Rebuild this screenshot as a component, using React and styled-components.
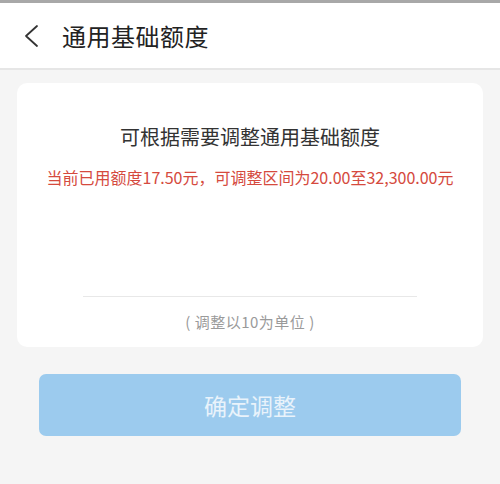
import React from 'react';
import styled, { createGlobalStyle } from 'styled-components';

const Global = createGlobalStyle`
  html, body { margin: 0; padding: 0; background: #f5f5f5; }
  body { font-family: "Noto Sans CJK SC", "Noto Sans", sans-serif; }
`;

const Page = styled.div`
  width: 500px;
  height: 484px;
  background: #f5f5f5;
  border-top: 3px solid #a8a8a8;
  box-sizing: border-box;
  overflow: hidden;
`;

const Header = styled.div`
  height: 65px;
  background: #fff;
  border-bottom: 2px solid #e6e6e6;
  display: flex;
  align-items: center;
  padding-left: 20px;
  gap: 20px;
`;

const BackBtn = styled.div`
  width: 22px;
  height: 24px;
  display: flex;
  align-items: center;
  justify-content: center;
`;

const Title = styled.div`
  font-size: 24px;
  color: #222;
  letter-spacing: 0.5px;
`;

const Body = styled.div`
  padding: 13px 17px 0;
  display: flex;
  flex-direction: column;
`;

const Card = styled.div`
  background: #fff;
  border-radius: 10px;
  padding: 40px 0 15px;
  display: flex;
  flex-direction: column;
  align-items: center;
`;

const CardTitle = styled.div`
  font-size: 20px;
  line-height: 28px;
  color: #333;
`;

const Range = styled.div`
  margin-top: 15px;
  font-size: 16px;
  line-height: 22px;
  color: #d54a3e;
`;

const Divider = styled.div`
  align-self: stretch;
  margin: 108px 66px 0;
  height: 1px;
  background: #e8e8e8;
`;

const Tip = styled.div`
  margin-top: 15px;
  font-size: 15px;
  line-height: 20px;
  letter-spacing: 0.5px;
  color: #9a9a9a;
`;

const Confirm = styled.button`
  margin: 27px 22px 0;
  height: 62px;
  border: none;
  border-radius: 7px;
  background: #9ccbee;
  color: #e9f3fb;
  font-family: inherit;
  font-size: 23px;
`;

export default function App() {
  return (
    <Page>
      <Global />
      <Header>
        <BackBtn>
          <svg width="16" height="24" viewBox="0 0 16 24" fill="none">
            <path d="M14 2 L3 12 L14 22" stroke="#333" strokeWidth="1.8" strokeLinecap="round" strokeLinejoin="round" />
          </svg>
        </BackBtn>
        <Title>通用基础额度</Title>
      </Header>
      <Body>
        <Card>
          <CardTitle>可根据需要调整通用基础额度</CardTitle>
          <Range>当前已用额度17.50元，可调整区间为20.00至32,300.00元</Range>
          <Divider />
          <Tip>( 调整以10为单位 )</Tip>
        </Card>
        <Confirm>确定调整</Confirm>
      </Body>
    </Page>
  );
}
